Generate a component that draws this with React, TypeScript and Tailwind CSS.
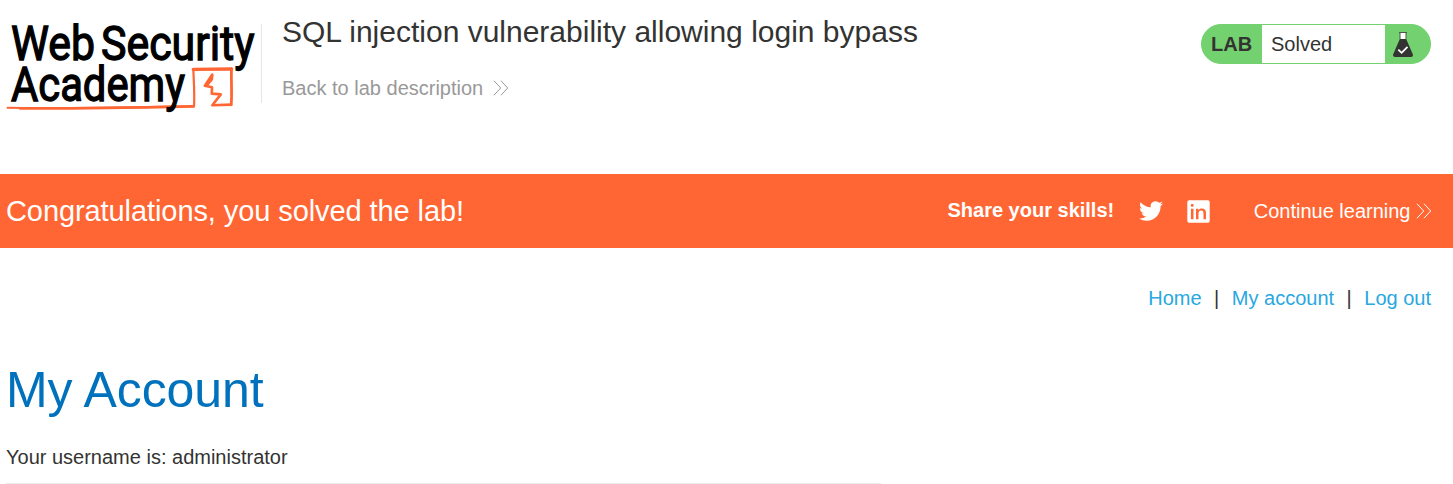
import React from "react";

function Chevrons({ className }: { className: string }) {
  return (
    <svg className={className} width="16" height="16" viewBox="0 0 16 16" fill="none" stroke="currentColor" strokeWidth="1">
      <path d="M1 .8 7.7 8 1 15.2M8 .8 14.7 8 8 15.2" />
    </svg>
  );
}

function Logo() {
  return (
    <svg width="259" height="114" viewBox="0 6 259 114" className="block shrink-0 overflow-visible">
      <g fill="none" stroke="#ff6633" strokeLinejoin="round" strokeLinecap="round">
        <path d="M7.5 107.8C60 108.8 120 107.6 193.5 106.3" strokeWidth="2" />
        <path d="M20 108.3C60 108.9 120 107.9 193.5 106.3" strokeWidth="2.7" />
        <path d="M194 106.5C194.8 94 193.8 82 193.3 69" strokeWidth="2.2" />
        <path d="M193.3 69.4 231.5 69" strokeWidth="3.4" />
        <path d="M231.5 69C231 82 232.2 93 231.2 104.8" strokeWidth="2.8" />
        <path d="M231 104.6 212.3 105.2 220.8 94.4 211.8 93.6 212 87.2 204.8 85.8 212.3 74.5 211.8 79.5 207 85.2" strokeWidth="2.6" />
      </g>
      <g fontFamily="Roboto, sans-serif" fontWeight="400" fontSize="47.5" fill="#000" stroke="#000" strokeWidth="1.3">
        <text x="11" y="59.5" textLength="84" lengthAdjust="spacingAndGlyphs">Web</text>
        <text x="101" y="59.5" textLength="153.5" lengthAdjust="spacingAndGlyphs">Security</text>
        <text x="11" y="100.5" textLength="174" lengthAdjust="spacingAndGlyphs">Academy</text>
      </g>
    </svg>
  );
}

function LabStatus() {
  return (
    <div className="mt-6 flex h-10 w-[230px] overflow-hidden rounded-[20px] border border-[#73d26f] bg-[#73d26f] text-[20px] leading-[39px] text-[#333332]">
      <span className="w-[60px] pl-[9px] font-bold">LAB</span>
      <span className="w-[123px] bg-white pl-[9px]">Solved</span>
      <svg width="22" height="27" viewBox="0 0 22 27" className="ml-[7px] mt-[6px]">
        <path d="M8 2h6v6H8z" fill="#fff" />
        <path d="M7 1.5h8M8 2v6M14 2v6" stroke="#4b5a49" strokeWidth="1" fill="none" />
        <path d="M7.8 8h6.4l6.6 15.3Q21.4 26 19 26H3Q.6 26 1.2 23.3Z" fill="#333332" />
        <path d="m6.3 18.6 3.3 3.2 5.9-5.9" fill="none" stroke="#fff" strokeWidth="1.8" />
      </svg>
    </div>
  );
}

function TwitterIcon() {
  return (
    <svg width="24" height="24" viewBox="0 0 24 24" fill="#fff">
      <path d="M23.953 4.57a10 10 0 01-2.825.775 4.958 4.958 0 002.163-2.723c-.951.555-2.005.959-3.127 1.184a4.92 4.92 0 00-8.384 4.482C7.69 8.095 4.067 6.13 1.64 3.162a4.822 4.822 0 00-.666 2.475c0 1.71.87 3.213 2.188 4.096a4.904 4.904 0 01-2.228-.616v.06a4.923 4.923 0 003.946 4.827 4.996 4.996 0 01-2.212.085 4.936 4.936 0 004.604 3.417 9.867 9.867 0 01-6.102 2.105c-.39 0-.779-.023-1.17-.067a13.995 13.995 0 007.557 2.209c9.053 0 13.998-7.496 13.998-13.985 0-.21 0-.42-.015-.63A9.935 9.935 0 0024 4.59z" />
    </svg>
  );
}

function LinkedInIcon() {
  return (
    <svg width="23" height="23" viewBox="0 0 23 23">
      <rect x=".3" y=".3" width="22.4" height="22.4" rx="1.8" fill="#fff" />
      <rect x="3.8" y="4" width="2.8" height="2.8" rx="1" fill="#ff6633" />
      <path d="M3.9 8.7h2.6v10.5H3.9zM9 8.7h2.4v1.5c.8-1.2 1.9-1.8 3.4-1.8 3 0 4.2 1.8 4.2 4.6v6.2h-2.5v-5.8c0-1.9-.7-2.8-2.3-2.8-1.7 0-2.7 1.1-2.7 3.1v5.5H9z" fill="#ff6633" />
    </svg>
  );
}

export default function App() {
  return (
    <div className="h-[484px] w-[1453px] overflow-hidden whitespace-nowrap bg-white font-['Liberation_Sans',Arial,sans-serif] text-[20px] leading-6 text-[#333332]">
      <header className="flex h-[174px] items-start">
        <div className="pt-[6px]">
          <Logo />
        </div>
        <div className="ml-[2px] mt-6 h-[79px] border-l border-[#e5e5e5] pl-5">
          <h2 className="-mt-[10px] text-[30px] leading-9">SQL injection vulnerability allowing login bypass</h2>
          <a href="#" className="mt-[26px] flex items-center text-[#999]">
            Back to lab description
            <Chevrons className="ml-[10px]" />
          </a>
        </div>
        <div className="ml-auto mr-[22px]">
          <LabStatus />
        </div>
      </header>

      <section className="flex h-[74px] items-center bg-[#ff6633] pl-[6px] pr-[21px] text-white">
        <h4 className="text-[29px] leading-9 tracking-[-0.085px]">Congratulations, you solved the lab!</h4>
        <span className="ml-auto pb-[2px] font-bold">Share your skills!</span>
        <a href="#" className="ml-[25px]"><TwitterIcon /></a>
        <a href="#" className="ml-6"><LinkedInIcon /></a>
        <a href="#" className="ml-[43.5px] flex items-center">
          Continue learning
          <Chevrons className="ml-[5.5px]" />
        </a>
      </section>

      <nav className="mt-[38px] flex justify-end pr-[22px] text-[#29a7df]">
        <a href="#">Home</a>
        <span className="mx-[12.5px] text-[#333332]">|</span>
        <a href="#">My account</a>
        <span className="mx-[12.5px] text-[#333332]">|</span>
        <a href="#">Log out</a>
      </nav>

      <main className="ml-[6px] w-[875px] border-b border-[#ebebeb] pb-[14px]">
        <h1 className="mt-[50px] text-[50px] leading-[60px] tracking-[-0.1px] text-[#0071bc]">My Account</h1>
        <p className="mt-[25px]">Your username is: administrator</p>
      </main>
    </div>
  );
}
